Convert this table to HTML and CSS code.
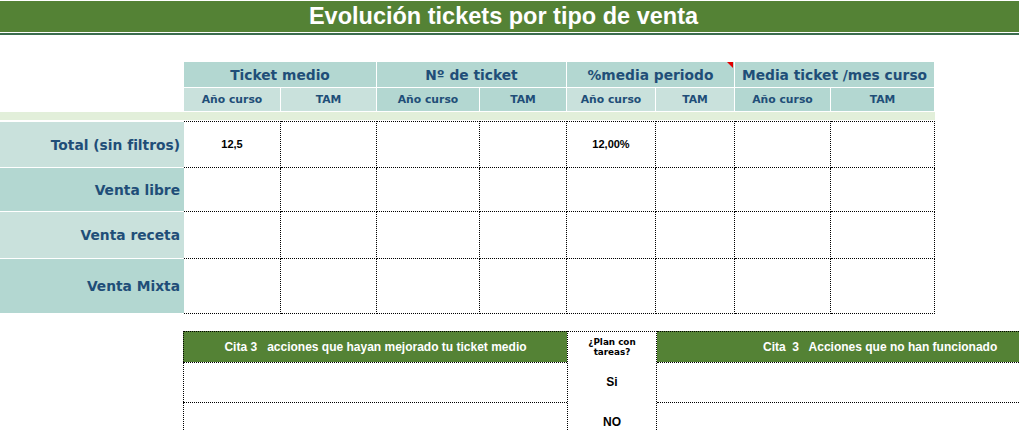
FILE: index.html
```html
<!DOCTYPE html>
<html lang="es">
<head>
<meta charset="utf-8">
<title>Evolución tickets por tipo de venta</title>
<link rel="stylesheet" href="styles.css">
</head>
<body>
<header class="title-bar"><h1>Evolución tickets por tipo de venta</h1></header>
<div class="title-rule"></div>

<section class="summary">
  <div class="corner corner-top"></div>
  <div class="group">Ticket medio</div>
  <div class="group">Nº de ticket</div>
  <div class="group has-note">%media periodo</div>
  <div class="group">Media ticket /mes curso</div>

  <div class="corner corner-sub"></div>
  <div class="sub light">Año curso</div>
  <div class="sub light">TAM</div>
  <div class="sub">Año curso</div>
  <div class="sub">TAM</div>
  <div class="sub light">Año curso</div>
  <div class="sub light">TAM</div>
  <div class="sub">Año curso</div>
  <div class="sub">TAM</div>

  <div class="band"></div>

  <div class="label light first">Total (sin filtros)</div>
  <div class="cell first">12,5</div>
  <div class="cell first"></div>
  <div class="cell first"></div>
  <div class="cell first"></div>
  <div class="cell first">12,00%</div>
  <div class="cell first"></div>
  <div class="cell first"></div>
  <div class="cell first"></div>

  <div class="label">Venta libre</div>
  <div class="cell"></div><div class="cell"></div><div class="cell"></div><div class="cell"></div>
  <div class="cell"></div><div class="cell"></div><div class="cell"></div><div class="cell"></div>

  <div class="label light">Venta receta</div>
  <div class="cell"></div><div class="cell"></div><div class="cell"></div><div class="cell"></div>
  <div class="cell"></div><div class="cell"></div><div class="cell"></div><div class="cell"></div>

  <div class="label">Venta Mixta</div>
  <div class="cell"></div><div class="cell"></div><div class="cell"></div><div class="cell"></div>
  <div class="cell"></div><div class="cell"></div><div class="cell"></div><div class="cell"></div>
</section>

<section class="actions">
  <div class="act-head left">Cita 3   acciones que hayan mejorado tu ticket medio</div>
  <div class="plan">
    <div class="plan-head">¿Plan con<br>tareas?</div>
    <div class="plan-opt">Si</div>
    <div class="plan-opt">NO</div>
  </div>
  <div class="act-head right">Cita  3   Acciones que no han funcionado</div>
  <div class="act-row left"></div>
  <div class="act-row right"></div>
  <div class="act-row left"></div>
  <div class="act-row right"></div>
</section>
</body>
</html>
```

FILE: styles.css
```css
* { box-sizing: border-box; }

html, body {
  margin: 0;
  padding: 0;
  background: #ffffff;
  overflow: hidden;
}

body {
  width: 1019px;
  height: 430px;
  font-family: "Liberation Sans", Arial, sans-serif;
}

.title-bar {
  margin-top: 1px;
  height: 31px;
  background: #548235;
  display: flex;
  align-items: center;
  justify-content: center;
  padding-right: 12px;
}

.title-bar h1 {
  margin: 0;
  font-family: "Liberation Sans", Arial, sans-serif;
  font-weight: bold;
  font-size: 23.5px;
  line-height: 1;
  color: #ffffff;
  padding-top: 1px;
}

.title-rule {
  margin-top: 1px;
  height: 2px;
  background: #3b6d4e;
}

/* ---------- summary table ---------- */
.summary {
  margin-top: 27px;
  width: 935px;
  display: grid;
  grid-template-columns: 184px 97px 96px 103px 87px 89px 79px 96px 104px;
  grid-template-rows: 26px 24px 9px 47px 44px 47px 55px;
  font-family: "DejaVu Sans", Verdana, sans-serif;
  color: #1f4e78;
}

.corner { grid-column: 1; }

.group {
  grid-column: span 2;
  background: #b3d7d1;
  border-right: 1px solid #ffffff;
  border-bottom: 1px solid #ffffff;
  display: flex;
  align-items: center;
  justify-content: center;
  font-weight: bold;
  font-size: 13.8px;
  white-space: nowrap;
}

.has-note { position: relative; }
.has-note::after {
  content: "";
  position: absolute;
  top: 0;
  right: 1px;
  width: 0;
  height: 0;
  border-left: 6px solid transparent;
  border-top: 6px solid #e00000;
}

.sub {
  background: #b3d7d1;
  border-right: 1px solid #ffffff;
  border-bottom: 1px solid #ffffff;
  display: flex;
  align-items: center;
  justify-content: center;
  font-weight: bold;
  font-size: 10.8px;
  white-space: nowrap;
}

.sub.light { background: #c9e1dc; }

.band {
  grid-column: 1 / -1;
  background: #e2efda;
  border-bottom: 1px solid #ffffff;
}

.label {
  background: #b3d7d1;
  border-bottom: 1px solid #ffffff;
  display: flex;
  align-items: center;
  justify-content: flex-end;
  padding-right: 4px;
  font-weight: bold;
  font-size: 13.8px;
  white-space: nowrap;
}

.label.light { background: #c9e1dc; }
.label.first { border-top: 1px solid #ffffff; }

.cell {
  border-right: 1px dotted #000000;
  border-bottom: 1px dotted #000000;
  display: flex;
  align-items: center;
  justify-content: center;
  font-family: "Liberation Sans", Arial, sans-serif;
  font-weight: bold;
  font-size: 11px;
  color: #000000;
  padding-bottom: 2px;
}

.cell.first { border-top: 1px dotted #000000; }

/* ---------- actions ---------- */
.actions {
  margin-top: 17px;
  margin-left: 183px;
  display: grid;
  grid-template-columns: 384px 90px 1fr;
  grid-template-rows: 31px 40px 40px;
  font-family: "Liberation Sans", Arial, sans-serif;
}

.act-head {
  background: #548235;
  border-top: 1px dotted #000000;
  display: flex;
  align-items: center;
  color: #ffffff;
  font-weight: bold;
  font-size: 12px;
  white-space: pre;
}

.act-head.left {
  grid-column: 1;
  border-left: 1px dotted #000000;
  justify-content: center;
}

.act-head.right {
  grid-column: 3;
  padding-left: 106px;
}

.act-row {
  border-top: 1px dotted #000000;
}

.act-row.left {
  grid-column: 1;
  border-left: 1px dotted #000000;
}

.act-row.right { grid-column: 3; }

.plan {
  grid-column: 2;
  grid-row: 1 / span 3;
  border-top: 1px dotted #000000;
  border-left: 1px dotted #000000;
  border-right: 1px dotted #000000;
  display: grid;
  grid-template-rows: 30px 40px 40px;
  text-align: center;
  color: #000000;
  font-weight: bold;
}

.plan-head {
  font-family: "DejaVu Sans", Verdana, sans-serif;
  font-size: 8.8px;
  line-height: 10px;
  padding-top: 5px;
}

.plan-opt {
  display: flex;
  align-items: center;
  justify-content: center;
  font-size: 12px;
}
```
